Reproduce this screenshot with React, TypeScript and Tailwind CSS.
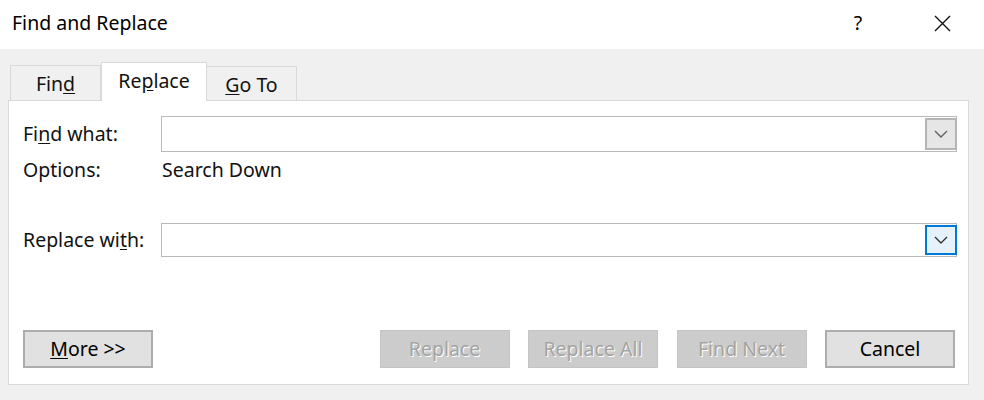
import React from "react";

const font = { fontFamily: '"Noto Sans", "Open Sans", Arial, sans-serif' };

function Chevron({ color }: { color: string }) {
  return (
    <svg width="14" height="8" viewBox="0 0 14 8" fill="none">
      <path d="M1 1l6 6 6-6" stroke={color} strokeWidth="1.4" />
    </svg>
  );
}

function Combo({ focused }: { focused?: boolean }) {
  return (
    <div className="relative flex-1 h-full border border-[#b9b9b9] bg-white">
      <div
        className={
          focused
            ? "absolute right-[-1px] top-[1px] bottom-[1px] w-[32px] flex items-center justify-center border-2 border-[#0078d7] bg-[#e5f1fb]"
            : "absolute right-[-1px] top-[1px] bottom-[1px] w-[32px] flex items-center justify-center border-2 border-[#b5b5b5] bg-[#e6e6e6]"
        }
      >
        <Chevron color={focused ? "#333333" : "#606060"} />
      </div>
    </div>
  );
}

function Btn({ children, disabled }: { children: React.ReactNode; disabled?: boolean }) {
  return (
    <div
      className={
        disabled
          ? "w-[130px] h-[38px] flex items-center justify-center bg-[#cccccc] border border-[#c4c4c4] text-[#a3a3a3] [text-shadow:1px_1px_0_#ffffff]"
          : "w-[130px] h-[38px] flex items-center justify-center bg-[#e1e1e1] border-2 border-[#adadad] text-[#000]"
      }
    >
      {children}
    </div>
  );
}

export default function App() {
  return (
    <div className="w-[984px] h-[400px] bg-[#f0f0f0] text-[19.5px] text-[#111] overflow-hidden" style={font}>
      <div className="h-[49px] bg-white flex items-center pl-[12px]">
        <span className="flex-1 text-[#000] -mt-[3px]">Find and Replace</span>
        <span className="w-[20px] text-center mr-[66px] -mt-[3px] text-[#000]">?</span>
        <svg width="17" height="17" viewBox="0 0 17 17" className="mr-[33px] -mt-[3px]">
          <path d="M1 1l15 15M16 1L1 16" stroke="#111" strokeWidth="1.4" />
        </svg>
      </div>

      <div className="pl-[8px] pr-[15px] pt-[13px]">
        <div className="flex items-end h-[38px] pl-[2px]">
          <div className="w-[91px] h-[35px] border border-b-0 border-[#d9d9d9] bg-[#f0f0f0] flex items-center justify-center pt-[2px]">
            Fin<span className="underline underline-offset-2">d</span>
          </div>
          <div className="w-[106px] h-[39px] border border-b-0 border-[#d9d9d9] bg-white flex items-center justify-center -mb-[1px] relative z-10 pb-[3px]">
            Re<span className="underline underline-offset-2">p</span>lace
          </div>
          <div className="w-[90px] h-[34px] border border-b-0 border-l-0 border-[#d9d9d9] bg-[#f0f0f0] flex items-center justify-center pt-[2px]">
            <span className="underline underline-offset-2">G</span>o To
          </div>
        </div>

        <div className="h-[285px] border border-[#d9d9d9] bg-white pt-[15px] pl-[14px] pr-[11px] flex flex-col">
          <div className="flex items-center h-[36px]">
            <span className="w-[138px]">
              Fi<span className="underline underline-offset-2">n</span>d what:
            </span>
            <Combo />
          </div>
          <div className="flex items-center h-[28px] mt-[4px]">
            <span className="w-[139px]">Options:</span>
            <span>Search Down</span>
          </div>
          <div className="flex items-center h-[34px] mt-[39px]">
            <span className="w-[138px]">
              Replace wi<span className="underline underline-offset-2">t</span>h:
            </span>
            <Combo focused />
          </div>
          <div className="flex items-center mt-[73px]">
            <Btn>
              <span>
                <span className="underline underline-offset-2">M</span>ore &gt;&gt;
              </span>
            </Btn>
            <div className="flex-1" />
            <div className="flex gap-[18.5px] mr-[2px]">
              <Btn disabled>Replace</Btn>
              <Btn disabled>Replace All</Btn>
              <Btn disabled>Find Next</Btn>
              <Btn>Cancel</Btn>
            </div>
          </div>
        </div>
      </div>
    </div>
  );
}
